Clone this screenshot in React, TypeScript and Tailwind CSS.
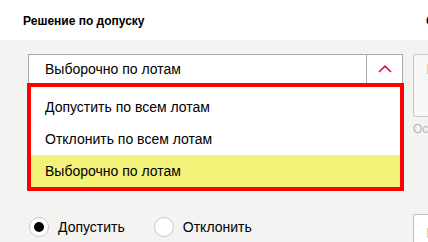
const options = ['Допустить по всем лотам', 'Отклонить по всем лотам', 'Выборочно по лотам'];

const Chevron = () => (
  <svg width="14" height="8" viewBox="0 0 14 8" fill="none">
    <path d="M1 7 L7 1.2 L13 7" stroke="#d4143f" strokeWidth="1.6" />
  </svg>
);

const Radio = ({ checked, label }: { checked?: boolean; label: string }) => (
  <label className="flex items-center">
    <span className="w-[20px] h-[20px] rounded-full border border-[#c9c9c9] bg-white flex items-center justify-center">
      {checked && <span className="w-[10px] h-[10px] rounded-full bg-black" />}
    </span>
    <span className="ml-[9px] text-[14px] leading-[20px] text-black">{label}</span>
  </label>
);

export default function App() {
  const selected = 2;

  return (
    <div
      className="w-[428px] h-[242px] overflow-hidden bg-[#f3f3f1]"
      style={{ fontFamily: '"Liberation Sans", Arial, sans-serif' }}
    >
      <div className="h-[40px] bg-white flex">
        <div className="w-[426px] shrink-0 pl-[23px] pt-[14px] text-[12px] leading-[14px] font-bold text-black">
          Решение по допуску
        </div>
        <div className="shrink-0 pt-[14px] text-[12px] leading-[14px] font-bold text-black whitespace-nowrap">
          Сведения
        </div>
      </div>

      <div className="flex pt-[14px] pl-[28px]">
        <div className="w-[375px] shrink-0">
          <div className="relative">
            <div className="h-[30px] flex border border-[#a9a9a9] bg-white">
              <div className="flex-1 pl-[16px] pt-[1px] flex items-center text-[14px] text-black">
                {options[selected]}
              </div>
              <div className="w-[36px] border-l border-[#a9a9a9] flex items-center justify-center">
                <Chevron />
              </div>
            </div>
            <div className="absolute left-[-1px] top-[29px] w-[377px] border-[4px] border-[#ff0000] bg-white pt-[4px] z-10">
              {options.map((o, i) => (
                <div
                  key={o}
                  className={`h-[32px] pl-[14px] flex items-center text-[14px] text-black ${i === selected ? 'bg-[#f3f279]' : 'bg-white'}`}
                >
                  {o}
                </div>
              ))}
            </div>
          </div>
          <div className="mt-[133px] flex items-center pl-[1px] gap-[29px]">
            <Radio checked label="Допустить" />
            <Radio label="Отклонить" />
          </div>
        </div>

        <div className="ml-[10px] w-[60px] shrink-0">
          <div className="h-[63px] border border-[#c8c8c8] rounded-[2px] bg-[#f7f7f6] pl-[12px] pt-[4px] text-[14px] text-[#d9c9ad]">
            Г
          </div>
          <div className="mt-[5px] text-[12px] leading-[14px] text-[#b5b5b5] whitespace-nowrap">Остаток</div>
          <div className="mt-[78px] h-[40px] border border-[#c0c0c0] rounded-[2px] bg-white pl-[12px] pt-[8px] text-[14px] text-[#d9c9ad]">
            Г
          </div>
        </div>
      </div>
    </div>
  );
}
